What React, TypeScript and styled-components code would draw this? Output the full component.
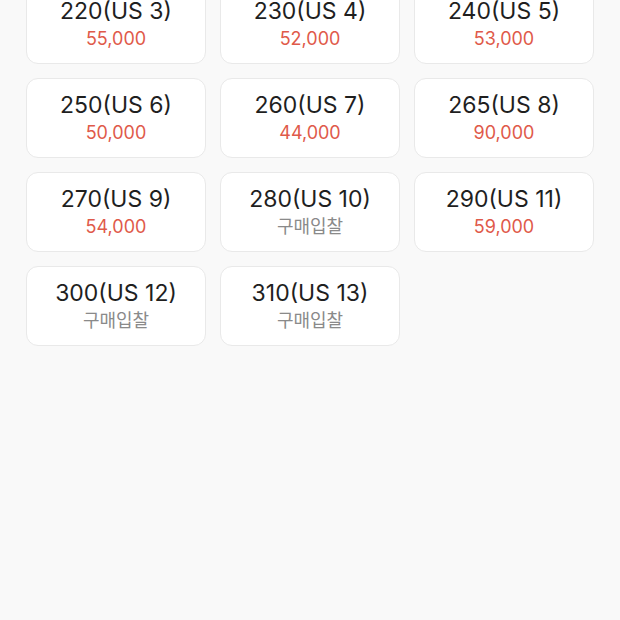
import React from 'react'
import styled, { createGlobalStyle } from 'styled-components'

const GlobalStyle = createGlobalStyle`
    html, body {
        margin: 0;
        padding: 0;
        background-color: #F9F9F9;
        font-family: Inter, "Noto Sans CJK KR", sans-serif;
        overflow: hidden;
    }
`

const Page = styled.div`
    width: 620px;
    height: 620px;
    background-color: #F9F9F9;
    box-sizing: border-box;
    padding: 0 26px;
    overflow: hidden;
`

const Grid = styled.div`
    display: grid;
    grid-template-columns: repeat(3, 180px);
    column-gap: 14px;
    row-gap: 14px;
    margin-top: -16px;
`

const SizeCard = styled.div`
    height: 80px;
    box-sizing: border-box;
    background-color: #FFFFFF;
    border: 1px solid #E9E9E9;
    border-radius: 12px;
    display: flex;
    flex-direction: column;
    align-items: center;
    justify-content: center;
    padding-top: 2px;
`

const SizeLabel = styled.p`
    margin: 0;
    font-size: 23px;
    line-height: 22px;
    color: #1F1F1F;
`

const Price = styled.p<{ $bid?: boolean }>`
    margin: 6px 0 0;
    font-size: 18px;
    line-height: 22px;
    color: ${({ $bid }) => ($bid ? '#8A8A8A' : '#DF5A4A')};
`

const sizes = [
    { size: '220(US 3)', price: '55,000' },
    { size: '230(US 4)', price: '52,000' },
    { size: '240(US 5)', price: '53,000' },
    { size: '250(US 6)', price: '50,000' },
    { size: '260(US 7)', price: '44,000' },
    { size: '265(US 8)', price: '90,000' },
    { size: '270(US 9)', price: '54,000' },
    { size: '280(US 10)', price: null },
    { size: '290(US 11)', price: '59,000' },
    { size: '300(US 12)', price: null },
    { size: '310(US 13)', price: null },
]

const App: React.FC = () => {
    return (
        <Page>
            <GlobalStyle />
            <Grid>
                {sizes.map((item) => (
                    <SizeCard key={item.size}>
                        <SizeLabel>{item.size}</SizeLabel>
                        {item.price
                            ? <Price>{item.price}</Price>
                            : <Price $bid>구매입찰</Price>}
                    </SizeCard>
                ))}
            </Grid>
        </Page>
    )
}

export default App
